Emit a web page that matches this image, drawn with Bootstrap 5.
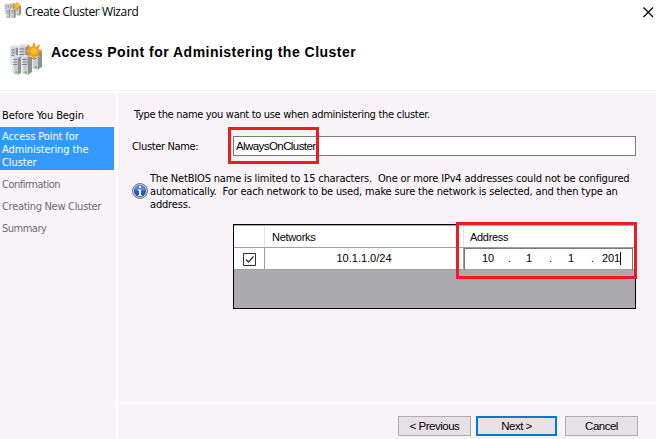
<!DOCTYPE html>
<html lang="en">
<head>
<meta charset="utf-8">
<title>Create Cluster Wizard</title>
<link rel="stylesheet" href="https://cdn.jsdelivr.net/npm/bootstrap@5.3.0/dist/css/bootstrap.min.css">
<style>
body{width:656px;height:439px;overflow:hidden;background:#fff;color:#000;font:11px/13px "DejaVu Sans Condensed","DejaVu Sans",sans-serif;font-stretch:condensed}
.titlebar{height:24px;padding:0 2px 0 4px;font:12px/24px "Open Sans",sans-serif;letter-spacing:-.38px}
.wizhead{height:66px;padding:0 0 0 9px}
.wizhead svg{margin-top:4px}
.wizhead h1{font:bold 14px/18px "Liberation Sans",sans-serif;letter-spacing:.48px;margin:-11px 0 0 9px}
.wizbody{height:349px;border-top:1px solid #f5f1f6}
.panes{margin-top:2px}
.side{width:116px;background:#f7f3f7;padding-top:16px}
.step{padding:4px 2px 5px;letter-spacing:-.3px;color:#6d6d6d}
.step.first{color:#000;padding-top:0;letter-spacing:-.12px}
.step.current{background:#3399ff;color:#fff;width:114px;padding:3px 2px 1px;margin-bottom:4px;letter-spacing:-.1px}
.step.near{letter-spacing:-.5px}
.main{margin-left:2px;background:#f7f3f7;position:relative}
.form-area{height:310px;border-bottom:1px solid #fff;padding:15px 20px 0 14px}
.form-area,.foot{width:538px}
.form-area{width:100%}
.intro{padding-left:2px;letter-spacing:-.32px}
.sans{font-family:"Liberation Sans",sans-serif}
.name-row{margin-top:15px;height:20px}
.name-row label{width:101px;letter-spacing:-.35px}
.name-row input{height:20px;width:403px;border:1px solid #7a7a7a;padding:0 2px;font:11.5px/18px "Liberation Sans",sans-serif;background:#fff;color:#000;letter-spacing:-.58px}
.info{margin-top:15px;height:39px}
.info p{white-space:pre;margin:2px 0 0 2px;letter-spacing:-.175px}
.netgrid{margin:14px 0 0 101px;width:403px;height:85px;border:1px solid #000;background:#abaaac;padding-top:1px}
.netrow{display:grid;grid-template-columns:31px 199px 171px;background:#fff;height:22px;border-bottom:1px solid #a0a0a0}
.netrow>div{border-right:1px solid #a0a0a0}
.netrow.head>div{border-color:#e4e4e4;padding:5px 0 0 7px;letter-spacing:-.3px}
.netrow.head>div:last-child{padding-left:6px}
.netrow>div:last-child{border-right:0}
.netrow .check{padding-left:9px}
.netrow .addr{border:1px solid #7a7a7a;border-bottom:0;width:169px;height:22px;display:grid;grid-template-columns:26px 18px 23px 19px 23px 11px 44px;padding:3px 0 0 17px;letter-spacing:-.1px}
.netrow .addr:last-child{border-right:1px solid #7a7a7a}
.caret{display:inline-block;width:1px;height:13px;background:#000;vertical-align:top}
.redbox{position:absolute;border:3px solid #ed1c24;pointer-events:none}
.redbox.n{left:110px;top:34px;width:91px;height:37px}
.redbox.a{left:338px;top:129px;width:181px;height:57px}
.foot{padding:13px 18px 0 0}
.wbtn{width:73px;height:20px;border:1px solid #adadad;background:#e5e1e5;padding:0;border-radius:0;font:11.5px/18px "Liberation Sans",sans-serif;color:#000;letter-spacing:-.5px}
.wbtn.primary{width:81px;border:2px solid #0078d7;line-height:16px;margin:0 8px 0 5px}
</style>
<script src="https://cdn.jsdelivr.net/npm/bootstrap@5.3.0/dist/js/bootstrap.bundle.min.js"></script>
</head>
<body>
<svg class="position-absolute" width="0" height="0">
<defs>
<symbol id="tower" viewBox="0 0 10 20" preserveAspectRatio="none"><path d="M6 2.500 10 1.500V17L6 20Z" fill="#8d9195"/><path d="M0 2H6V20L0 18Z" fill="#c9cccf"/><path d="M0 2H2V18.600L0 18Z" fill="#e6e8ea"/><path d="M0 2 3 0 10 1 6 2.500Z" fill="#dfe1e3"/><path d="M1 4.500H5.200M1 7H5.200M1 9.500H5.200" stroke="#7c838a" stroke-width=".9"/><path d="M3.500 16.500h1.800v1.700H3.500z" fill="#50c820"/></symbol>
<symbol id="cluster" viewBox="0 0 33 33"><use href="#tower" x="1" y="2" width="10" height="22"/><use href="#tower" x="9" y="1" width="12" height="22"/><use href="#tower" x="22" y="5" width="11" height="22"/><use href="#tower" x="3" y="12" width="10" height="20"/><use href="#tower" x="12" y="12" width="11" height="20"/><path d="m25 0 1.500 5 4-3-2 4.500 4.500 1.500-4.500 1.500 2 4.500-4-2.500L25 17l-2-5.500-4 2.500 1.500-4.500L16 8l4.500-1.500L18.500 2l4.500 3Z" fill="#f9a61c" stroke="#f09a18" stroke-width="1"/><circle cx="25" cy="8" r="3" fill="#ffc038"/></symbol>
</defs></svg>
<header class="titlebar d-flex align-items-center">
<svg width="17" height="17" class="mb-1"><use href="#cluster"/></svg><span class="ms-1">Create Cluster Wizard</span>
<svg class="ms-auto" width="11" height="11" stroke="#000" stroke-width="1.200"><path d="M.5.500 10 10M10 .5.500 10"/></svg>
</header>
<div class="wizhead d-flex align-items-center"><svg width="33" height="33"><use href="#cluster"/></svg><h1>Access Point for Administering the Cluster</h1></div>
<div class="wizbody">
<div class="panes d-flex h-100">
<nav class="side flex-shrink-0">
<div class="step first">Before You Begin</div>
<div class="step current">Access Point for<br>Administering the<br>Cluster</div>
<div class="step near">Confirmation</div>
<div class="step">Creating New Cluster</div>
<div class="step near">Summary</div>
</nav>
<main class="main flex-grow-1">
<div class="form-area">
<div class="intro">Type the name you want to use when administering the cluster.</div>
<div class="name-row d-flex align-items-center"><label for="cn">Cluster Name:</label><input id="cn" value="AlwaysOnCluster"></div>
<div class="info d-flex align-items-center"><svg width="16" height="16" viewBox="0 0 16 16" class="flex-shrink-0"><circle cx="8" cy="8" r="7.500" fill="#c5c8d3" stroke="#777b87"/><circle cx="8" cy="8" r="6" fill="#2459c5"/><path d="M2.500 7a5.500 5 0 0 1 11 0Q8 9 2.500 7" fill="#5b86de"/><path d="M7 3h2v2H7zM6 6.500h3V12h1v1H6v-1h1V7.500H6z" fill="#fff"/></svg><p>The NetBIOS name is limited to 15 characters.  One or more IPv4 addresses could not be configured
automatically.  For each network to be used, make sure the network is selected, and then type an
address.</p></div>
<div class="netgrid sans">
<div class="netrow head"><div></div><div>Networks</div><div>Address</div></div>
<div class="netrow"><div class="check d-flex align-items-center"><svg width="13" height="13" fill="none" stroke="#333"><path d="M.5.500h12v12H.5z"/><path d="m3 6.500 2.500 2.500L10.500 3.500" stroke-width="1.300"/></svg></div><div class="text-center pt-1">10.1.1.0/24</div>
<div class="addr"><span>10</span><span>.</span><span>1</span><span>.</span><span>1</span><span>.</span><span class="text-nowrap d-flex">201<i class="caret"></i></span></div></div>
</div>
</div>
<div class="foot d-flex justify-content-end"><button class="wbtn">&lt; Previous</button><button class="wbtn primary">Next &gt;</button><button class="wbtn">Cancel</button></div>
<div class="redbox n"></div><div class="redbox a"></div>
</main>
</div></div>
</body>
</html>
